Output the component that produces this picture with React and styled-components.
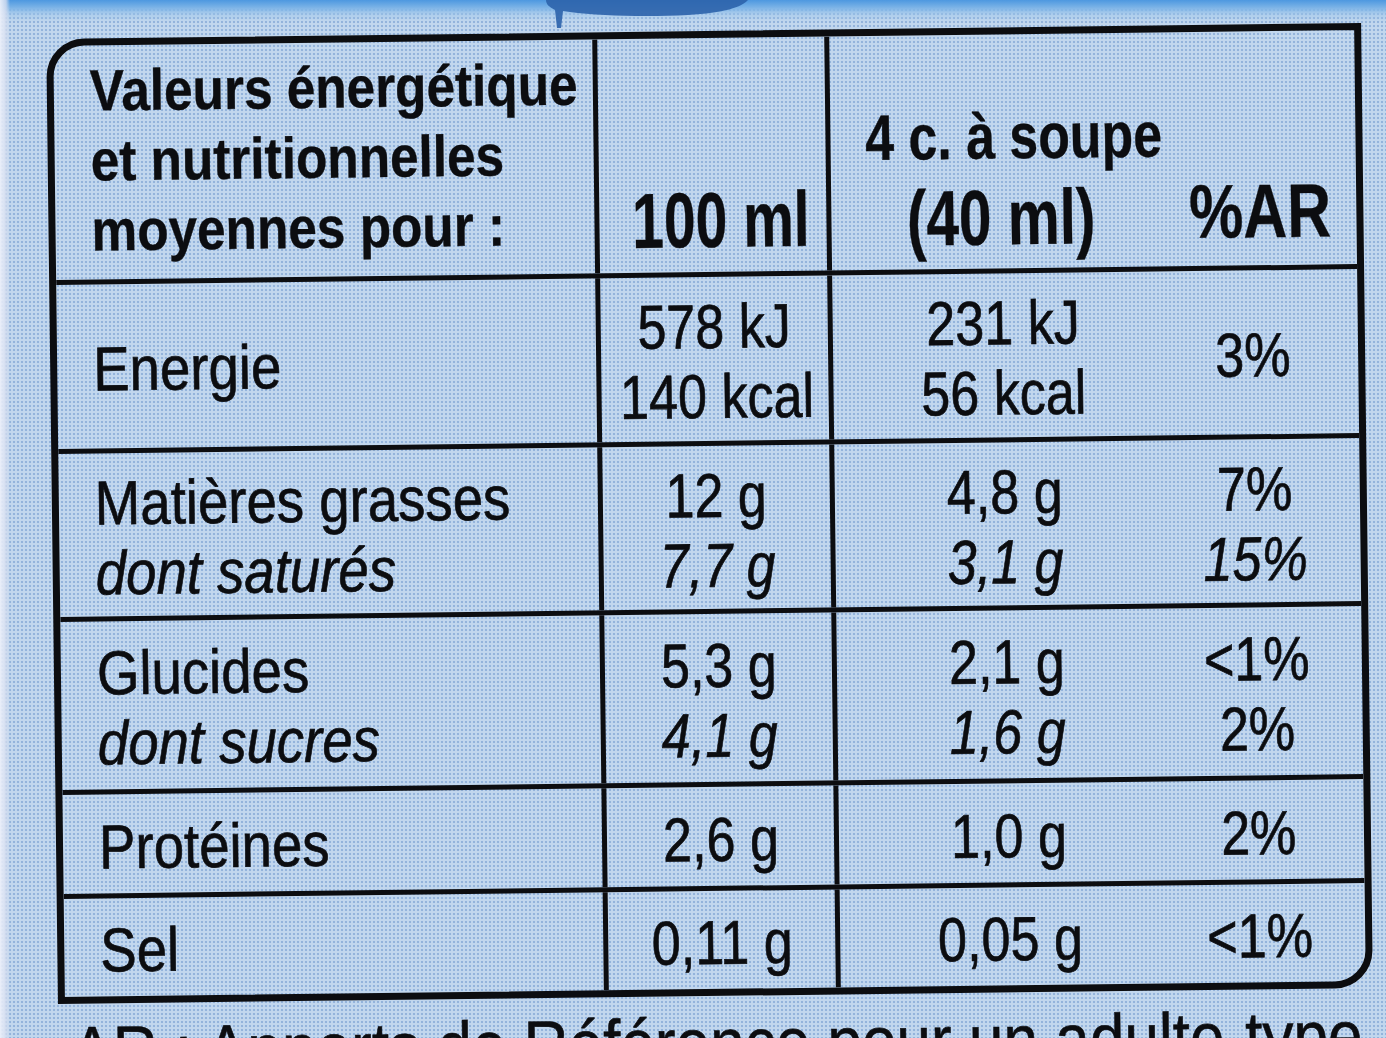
import React from "react";
import styled, { createGlobalStyle } from "styled-components";

const INK = "#0c0d10";

const GlobalStyle = createGlobalStyle`
  html, body { margin: 0; padding: 0; width: 100%; height: 100%; overflow: hidden; }
  body {
    background-color: #c2d7ee;
    background-image: radial-gradient(circle at 50% 50%, rgba(110,150,205,0.55) 0, rgba(110,150,205,0.55) 1.1px, transparent 1.6px);
    background-size: 4px 4px;
    font-family: "Liberation Sans", Arial, Helvetica, sans-serif;
    color: ${INK};
  }
  #root { height: 100%; }
`;

const Page = styled.main`
  position: relative;
  width: 1386px;
  height: 1038px;
  box-sizing: border-box;
  padding: 31px 0 0 52px;
  overflow: hidden;
  background:
    linear-gradient(to right, rgba(236, 240, 250, 0.95) 0, rgba(214, 222, 240, 0.8) 6px, rgba(214, 222, 240, 0) 10px),
    linear-gradient(to bottom, #4d98e0 0, #78b1e6 7px, rgba(150, 195, 235, 0.5) 14px, rgba(190, 215, 240, 0) 22px);
`;

const TopBlob = styled.svg`
  position: absolute;
  top: 0;
  left: 538px;
  width: 216px;
  height: 34px;
`;

const Sheet = styled.section`
  width: 1315px;
  transform: rotate(-0.7deg);
  transform-origin: 657px 480px;
`;

const Table = styled.div`
  width: 1315px;
  box-sizing: border-box;
  border: 7px solid ${INK};
  border-radius: 38px 0 38px 0;
  overflow: hidden;
`;

const Row = styled.div`
  display: grid;
  grid-template-columns: 539px 232px 1fr;
  box-sizing: border-box;
  height: ${(p) => p.$h + (p.$first ? 0 : 5)}px;
  border-top: ${(p) => (p.$first ? 0 : 5)}px solid ${INK};
`;

const Line = styled.div`
  font-size: ${(p) => p.$size}px;
  line-height: ${(p) => p.$lh}px;
  font-weight: ${(p) => (p.$bold ? 700 : 400)};
  font-style: ${(p) => (p.$italic ? "italic" : "normal")};
  -webkit-text-stroke: ${(p) => (p.$bold ? 0.4 : 0.7)}px ${INK};
  white-space: nowrap;
  text-align: ${(p) => p.$align || "left"};
  margin-bottom: ${(p) => p.$mb || 0}px;
`;

const Squeeze = styled.span`
  display: inline-block;
  transform: scaleX(${(p) => p.$k});
  transform-origin: ${(p) => p.$origin || "center"} center;
`;

const HeadLabel = styled.div`
  display: flex;
  flex-direction: column;
  justify-content: flex-start;
  padding: 10px 0 0 36px;
`;

const HeadValue = styled.div`
  display: flex;
  flex-direction: column;
  justify-content: flex-end;
  border-left: 5px solid ${INK};
  padding-bottom: 13px;
`;

const HeadPortion = styled.div`
  display: grid;
  grid-template-columns: 340px 160px 1fr;
  border-left: 5px solid ${INK};
`;

const HeadSub = styled.div`
  display: flex;
  flex-direction: column;
  justify-content: flex-end;
  padding-bottom: ${(p) => p.$pb}px;
`;

const LabelCell = styled.div`
  display: flex;
  flex-direction: column;
  justify-content: center;
  padding: ${(p) => p.$pt}px 0 0 36px;
`;

const ValueCell = styled.div`
  display: flex;
  flex-direction: column;
  justify-content: center;
  border-left: 5px solid ${INK};
  padding-top: ${(p) => p.$pt}px;
`;

const PortionCell = styled.div`
  display: grid;
  grid-template-columns: 340px 160px 1fr;
  border-left: 5px solid ${INK};
`;

const SubCol = styled.div`
  display: flex;
  flex-direction: column;
  justify-content: center;
  padding-top: ${(p) => p.$pt}px;
`;

const Footnote = styled.p`
  margin: 13px 0 0 13px;
  font-size: 69px;
  line-height: 69px;
  white-space: nowrap;
  -webkit-text-stroke: 0.6px ${INK};
`;

const rows = [
  {
    h: 164,
    label: [{ t: "Energie" }],
    v100: [{ t: "578 kJ" }, { t: "140 kcal" }],
    portion: [{ t: "231 kJ" }, { t: "56 kcal" }],
    ar: [{ t: "3%" }],
  },
  {
    h: 163,
    label: [{ t: "Matières grasses" }, { t: "dont saturés", i: true }],
    v100: [{ t: "12 g" }, { t: "7,7 g", i: true }],
    portion: [{ t: "4,8 g" }, { t: "3,1 g", i: true }],
    ar: [{ t: "7%" }, { t: "15%", i: true }],
  },
  {
    h: 168,
    label: [{ t: "Glucides" }, { t: "dont sucres", i: true }],
    v100: [{ t: "5,3 g" }, { t: "4,1 g", i: true }],
    portion: [{ t: "2,1 g" }, { t: "1,6 g", i: true }],
    ar: [{ t: "<1%" }, { t: "2%" }],
  },
  {
    h: 99,
    label: [{ t: "Protéines" }],
    v100: [{ t: "2,6 g" }],
    portion: [{ t: "1,0 g" }],
    ar: [{ t: "2%" }],
  },
  {
    h: 98,
    label: [{ t: "Sel" }],
    v100: [{ t: "0,11 g" }],
    portion: [{ t: "0,05 g" }],
    ar: [{ t: "<1%" }],
  },
];

const LH = 70;

function Lines({ items, align, k, origin }) {
  return items.map((it) => (
    <Line key={it.t} $size={62} $lh={LH} $italic={it.i} $align={align}>
      <Squeeze $k={k} $origin={origin}>{it.t}</Squeeze>
    </Line>
  ));
}

export default function App() {
  const PT = 6;
  return (
    <>
      <GlobalStyle />
      <Page>
        <TopBlob viewBox="0 0 216 34" aria-hidden="true">
          <path
            d="M8 0 L210 0 C204 7 186 13 150 15 C110 17 62 16 32 12 L25 11 L23 28 L19 28 L17 10 C11 7 8 4 8 0 Z"
            fill="#2c63ab"
            opacity="0.9"
          />
        </TopBlob>
        <Sheet>
          <Table>
            <Row $first $h={234}>
              <HeadLabel>
                {["Valeurs énergétique", "et nutritionnelles", "moyennes pour :"].map((t) => (
                  <Line key={t} $size={58} $lh={70} $bold>
                    <Squeeze $k={0.885} $origin="left">{t}</Squeeze>
                  </Line>
                ))}
              </HeadLabel>
              <HeadValue>
                <Line $size={78} $lh={78} $bold $align="center">
                  <Squeeze $k={0.73}>100 ml</Squeeze>
                </Line>
              </HeadValue>
              <HeadPortion>
                <HeadSub $pb={12}>
                  <Line $size={64} $lh={64} $bold $align="center" $mb={10}>
                    <Squeeze $k={0.81}>4 c. à soupe</Squeeze>
                  </Line>
                  <Line $size={78} $lh={78} $bold $align="center">
                    <Squeeze $k={0.75}>(40 ml)</Squeeze>
                  </Line>
                </HeadSub>
                <HeadSub $pb={16}>
                  <Line $size={76} $lh={76} $bold $align="center">
                    <Squeeze $k={0.8}>%AR</Squeeze>
                  </Line>
                </HeadSub>
              </HeadPortion>
            </Row>
            {rows.map((r) => (
              <Row key={r.label[0].t} $h={r.h}>
                <LabelCell $pt={PT}>
                  <Lines items={r.label} k={0.88} origin="left" />
                </LabelCell>
                <ValueCell $pt={PT}>
                  <Lines items={r.v100} align="center" k={0.84} />
                </ValueCell>
                <PortionCell>
                  <SubCol $pt={PT}>
                    <Lines items={r.portion} align="center" k={0.84} />
                  </SubCol>
                  <SubCol $pt={PT}>
                    <Lines items={r.ar} align="center" k={0.84} />
                  </SubCol>
                </PortionCell>
              </Row>
            ))}
          </Table>
          <Footnote>
            <Squeeze $k={0.9} $origin="left">AR : Apports de Référence pour un adulte-type</Squeeze>
          </Footnote>
        </Sheet>
      </Page>
    </>
  );
}
